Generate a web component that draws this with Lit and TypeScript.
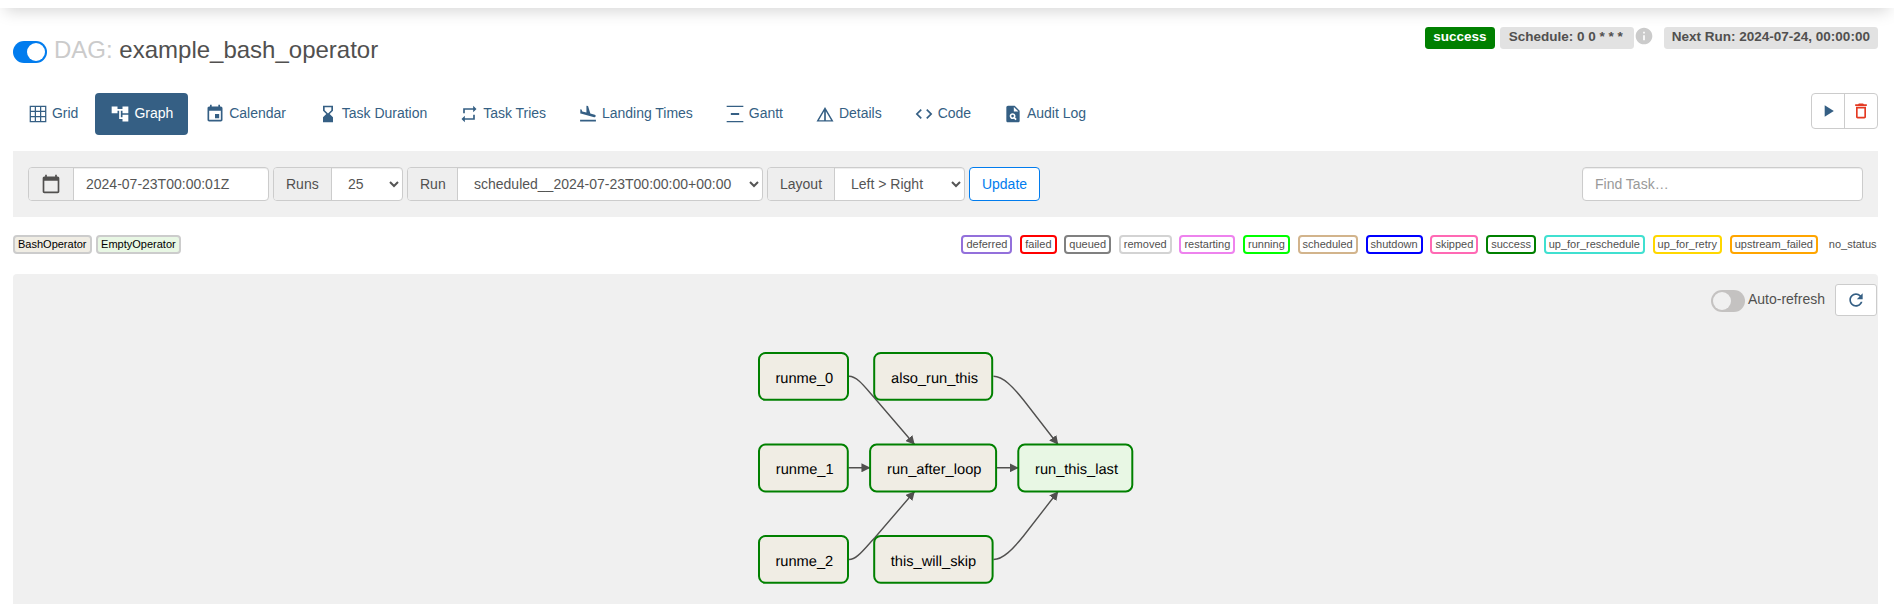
import { LitElement, html, css, svg } from "lit";
import { customElement, property } from "lit/decorators.js";

const ICONS: Record<string, string> = {
  grid: "M2 2h20v20H2zM3.5 3.5v4.6h4.6V3.5zM9.6 3.5v4.6h4.8V3.5zM15.9 3.5v4.6h4.6V3.5zM3.5 9.6v4.8h4.6v-4.8zM9.6 9.6v4.8h4.8v-4.8zM15.9 9.6v4.8h4.6v-4.8zM3.5 15.9v4.6h4.6v-4.6zM9.6 15.9v4.6h4.8v-4.6zM15.9 15.9v4.6h4.6v-4.6z",
  graph: "M22 11V3h-7v3H9V3H2v8h7V8h2v10h4v3h7v-8h-7v3h-2V8h2v3z",
  event: "M17 12h-5v5h5v-5zM16 1v2H8V1H6v2H5c-1.11 0-1.99.9-1.99 2L3 19c0 1.1.89 2 2 2h14c1.1 0 2-.9 2-2V5c0-1.1-.9-2-2-2h-1V1h-2zm3 18H5V8h14v11z",
  hourglass: "M18 22l-.01-6L14 12l3.99-4.01L18 2H6v6l4 4-4 3.99V22h12zM8 7.5V4h8v3.5l-4 4-4-4z",
  repeat: "M7 7h10v3l4-4-4-4v3H5v6h2V7zm10 10H7v-3l-4 4 4 4v-3h12v-6h-2v4z",
  landing: "M2.5 19h19v2h-19zm7.18-5.73l4.35 1.16 5.31 1.42c.8.21 1.62-.26 1.84-1.06.21-.8-.26-1.62-1.06-1.84l-5.31-1.42-2.76-9.02L10.12 2v8.28L5.15 8.95l-.93-2.32-1.45-.39v5.17l1.6.43 5.31 1.43z",
  gantt: "M22 2.2v1.4H2V2.2h20zM7 10.8v2.4h10v-2.4H7zM2 20.4v1.4h20v-1.4H2z",
  triangle: "M12 3.6L1.8 21h20.4L12 3.6zm1 5L19.3 19.4H13zM11 8.6V19.4H4.7z",
  code: "M9.4 16.6L4.8 12l4.6-4.6L8 6l-6 6 6 6 1.4-1.4zm5.2 0l4.6-4.6-4.6-4.6L16 6l6 6-6 6-1.4-1.4z",
  audit: "M14 2H6c-1.1 0-1.99.9-1.99 2L4 20c0 1.1.89 2 1.99 2H18c1.1 0 2-.9 2-2V8l-6-6zm1.04 17.45l-1.88-1.88c-1.33.71-3.01.53-4.13-.59-1.37-1.37-1.37-3.58 0-4.95 1.37-1.37 3.58-1.37 4.95 0 1.12 1.12 1.31 2.8.59 4.13l1.88 1.88-1.41 1.41zM13 9V3.5L18.5 9H13zM11.5 12.9a1.6 1.6 0 1 0 0 3.2 1.6 1.6 0 0 0 0-3.2z",
  calendar: "M20 3h-1V1h-2v2H7V1H5v2H4c-1.1 0-2 .9-2 2v16c0 1.1.9 2 2 2h16c1.1 0 2-.9 2-2V5c0-1.1-.9-2-2-2zm0 18H4V8h16v13z",
  play: "M8 5v14l11-7z",
  trash: "M6 19c0 1.1.9 2 2 2h8c1.1 0 2-.9 2-2V7H6v12zM8 9h8v10H8V9zm7.5-5l-1-1h-5l-1 1H5v2h14V4h-3.5z",
  refresh: "M17.65 6.35C16.2 4.9 14.21 4 12 4c-4.42 0-7.99 3.58-7.99 8s3.57 8 7.99 8c3.73 0 6.84-2.55 7.73-6h-2.08c-.82 2.33-3.04 4-5.65 4-3.31 0-6-2.69-6-6s2.69-6 6-6c1.66 0 3.14.69 4.22 1.78L13 11h7V4l-2.35 2.35z",
  info: "M12 2C6.48 2 2 6.48 2 12s4.48 10 10 10 10-4.48 10-10S17.52 2 12 2zm1 15h-2v-6h2v6zm0-8h-2V7h2v2z",
};

const TABS: [string, string][] = [
  ["grid", "Grid"],
  ["graph", "Graph"],
  ["event", "Calendar"],
  ["hourglass", "Task Duration"],
  ["repeat", "Task Tries"],
  ["landing", "Landing Times"],
  ["gantt", "Gantt"],
  ["triangle", "Details"],
  ["code", "Code"],
  ["audit", "Audit Log"],
];

const STATES: [string, string][] = [
  ["deferred", "mediumpurple"],
  ["failed", "red"],
  ["queued", "gray"],
  ["removed", "lightgrey"],
  ["restarting", "violet"],
  ["running", "lime"],
  ["scheduled", "tan"],
  ["shutdown", "blue"],
  ["skipped", "hotpink"],
  ["success", "green"],
  ["up_for_reschedule", "turquoise"],
  ["up_for_retry", "gold"],
  ["upstream_failed", "orange"],
];

/* Canvas coordinates; the drawing's origin is the top left of the panel. */
const NODES = [
  { id: "runme_0", x: 746, y: 79, w: 89, h: 46.8, tx: 762.4, ty: 109 },
  { id: "also_run_this", x: 861.2, y: 79, w: 118, h: 46.8, tx: 878, ty: 109 },
  { id: "runme_1", x: 746, y: 170.6, w: 88.8, h: 46.8, tx: 762.8, ty: 200 },
  { id: "run_after_loop", x: 857.1, y: 170.6, w: 126, h: 46.8, tx: 874, ty: 200 },
  { id: "run_this_last", x: 1005.3, y: 170.6, w: 114, h: 46.8, tx: 1022, ty: 200, empty: true },
  { id: "runme_2", x: 746, y: 262, w: 89, h: 46.8, tx: 762.4, ty: 291.6 },
  { id: "this_will_skip", x: 861.2, y: 262, w: 118.4, h: 46.8, tx: 877.8, ty: 291.6 },
];

const EDGES = [
  "M836 102.3C844 102.3 851 112 862 124.5L901.5 170.5",
  "M836 285.5C844 285.5 851 275 862 263.5L901.5 217.5",
  "M980.5 102.3C990 102.3 1000 113 1010.5 126L1045 170.5",
  "M980.5 285.5C990 285.5 1000 275 1010.5 262L1045 217.5",
  "M835.5 193.8L857 193.8",
  "M984 193.8L1005.3 193.8",
];

@customElement("md-icon")
class MdIcon extends LitElement {
  @property() name = "";
  static styles = css`
    :host { display: block; width: 20px; height: 20px; flex: none; }
    .glyph { display: block; width: 100%; height: 100%; fill: currentColor; }
  `;
  render() {
    return html`<svg class="glyph" viewBox="0 0 24 24"><path fill-rule="evenodd" d=${ICONS[this.name]}></path></svg>`;
  }
}

@customElement("app-root")
class AppRoot extends LitElement {
  static styles = css`
    * { box-sizing: border-box; }
    :host {
      display: flex;
      flex-direction: column;
      height: 604px;
      overflow: hidden;
      background: #fff;
      color: #51504f;
      font: 14px/20px "Liberation Sans", Arial, sans-serif;
    }
    .navbar { height: 58px; margin-top: -50px; flex: none; background: #fff; box-shadow: 0 8px 16px -5px rgba(0, 0, 0, 0.17); }
    .page { flex: 1; display: flex; flex-direction: column; padding: 19px 16px 0 13px; min-height: 0; }
    .header { display: flex; justify-content: space-between; height: 66px; }
    .title { display: flex; align-items: flex-start; gap: 7px; padding-top: 14px; }
    .switch { width: 34px; height: 22px; border-radius: 11px; background: #017cee; padding: 2px; display: flex; justify-content: flex-end; }
    .switch.off { background: #c4c2c1; justify-content: flex-start; }
    .knob { width: 18px; height: 18px; border-radius: 50%; background: #fff; }
    .off .knob { background: #f0f0f0; }
    .name { margin: -4px 0 0; font-size: 24px; line-height: 26px; font-weight: 400; white-space: pre; }
    .muted { color: #cbcbcb; }
    .badges { display: flex; align-items: flex-start; }
    .label { height: 22px; padding: 0 8.1px; border-radius: 3.4px; background: #e2e2e2; font-weight: 700; font-size: 13.5px; line-height: 20px; white-space: pre; }
    .label.success { background: green; color: #fff; margin-right: 5px; }
    .label.schedule { width: 134px; padding-left: 9px; }
    .info { color: #cbcbcb; margin: -1px 10px 0 0; }
    .row { display: flex; justify-content: space-between; height: 58px; align-items: flex-start; }
    .tabs { display: flex; gap: 2px; }
    .tab { display: flex; gap: 4px; height: 42px; padding: 11px 15px; color: #355f84; border-radius: 4px; line-height: 19px; letter-spacing: -0.02px; white-space: nowrap; }
    .tab.active { background: #355f84; color: #fff; }
    .actions { display: flex; border: 1px solid #ccc; border-radius: 4px; height: 36px; width: 67px; }
    .action { flex: 1; display: flex; justify-content: center; padding-top: 7px; color: #355f84; }
    .action + .action { border-left: 1px solid #ccc; color: #e43921; }
    .filters { display: flex; gap: 4px; height: 66px; padding: 16px 15px; background: #f0f0f0; }
    .group { display: flex; height: 34px; border: 1px solid #ccc; border-radius: 4px; overflow: hidden; background: #fff; box-shadow: inset 0 1px 1px rgba(0, 0, 0, 0.075); }
    .addon { background: #eee; border-right: 1px solid #ccc; padding: 6px 12px; white-space: nowrap; }
    .field { flex: 1; min-width: 0; border: 0; background: transparent; font: inherit; color: #555; padding: 6px 12px; height: 32px; outline: 0; }
    .field::placeholder { color: #999; opacity: 1; }
    .date { width: 241px; }
    .date .addon { width: 45px; }
    .runs { width: 130px; }
    .runs .addon { width: 58px; }
    .run { width: 356px; }
    .run .addon { width: 50px; }
    .layout { width: 198px; }
    .find { width: 281px; margin-left: auto; }
    .update { width: 71px; height: 34px; border: 1px solid #017cee; border-radius: 4px; background: #fff; color: #017cee; font: inherit; padding: 0; }
    .legend { display: flex; justify-content: space-between; height: 57px; padding-top: 18px; font-size: 11px; line-height: 15px; }
    .ops { display: flex; gap: 4px; align-items: flex-start; color: #000; }
    .states { display: flex; gap: 7.8px; align-items: flex-start; padding-right: 1.5px; }
    .item { height: 19px; border: 2px solid #ccc; border-radius: 4px; padding: 0 3px; white-space: nowrap; }
    .none { line-height: 19px; padding-left: 3px; }
    .bash { background: #f0ede4; padding-right: 3.6px; }
    .empty { background: #e8f7e4; }
    .canvas { flex: 1; position: relative; background: #f0f0f0; border-radius: 4px 4px 0 0; overflow: hidden; min-height: 0; }
    .drawing { position: absolute; left: 0; top: 0; width: 1865px; height: 330px; }
    .node { fill: #f0ede4; stroke: green; stroke-width: 2; }
    .node.last { fill: #e8f7e4; }
    .edge { fill: none; stroke: #51504f; stroke-width: 1.4; }
    .head { fill: #51504f; }
    .task { font-size: 14.65px; fill: #000; text-rendering: geometricPrecision; }
    .controls { position: relative; display: flex; justify-content: flex-end; align-items: flex-start; padding: 10px 1px 0 0; }
    .controls .switch { margin: 6px 3px 0 0; }
    .auto { margin-right: 10px; line-height: 30px; }
    .reload { width: 42px; height: 32px; border: 1px solid #ccc; border-radius: 3px; background: #fff; color: #355f84; padding: 5px 10px; }
  `;

  render() {
    return html`
      <div class="navbar"></div>
      <div class="page">
        <div class="header">
          <div class="title">
            <div class="switch"><div class="knob"></div></div>
            <h3 class="name"><span class="muted">DAG:</span> example_bash_operator</h3>
          </div>
          <div class="badges">
            <span class="label success">success</span>
            <span class="label schedule">Schedule: 0 0 * * *</span>
            <md-icon class="info" name="info"></md-icon>
            <span class="label">Next Run: 2024-07-24, 00:00:00</span>
          </div>
        </div>
        <div class="row">
          <nav class="tabs">
            ${TABS.map(([icon, text]) => html`<a class="tab ${text === "Graph" ? "active" : ""}"><md-icon name=${icon}></md-icon>${text}</a>`)}
          </nav>
          <div class="actions">
            <div class="action"><md-icon name="play"></md-icon></div>
            <div class="action"><md-icon name="trash"></md-icon></div>
          </div>
        </div>
        <div class="filters">
          <div class="group date">
            <div class="addon"><md-icon name="calendar"></md-icon></div>
            <input class="field" .value=${"2024-07-23T00:00:01Z"} />
          </div>
          <div class="group runs">
            <div class="addon">Runs</div>
            <select class="field"><option>25</option></select>
          </div>
          <div class="group run">
            <div class="addon">Run</div>
            <select class="field"><option>scheduled__2024-07-23T00:00:00+00:00</option></select>
          </div>
          <div class="group layout">
            <div class="addon">Layout</div>
            <select class="field"><option>Left &gt; Right</option></select>
          </div>
          <button class="update">Update</button>
          <div class="group find"><input class="field" placeholder="Find Task…" /></div>
        </div>
        <div class="legend">
          <div class="ops">
            <span class="item bash">BashOperator</span>
            <span class="item empty">EmptyOperator</span>
          </div>
          <div class="states">
            ${STATES.map(([name, color]) => html`<span class="item" style="border-color:${color}">${name}</span>`)}
            <span class="none">no_status</span>
          </div>
        </div>
        <div class="canvas">
          <svg class="drawing" viewBox="0 0 1865 330">
            <defs>
              <marker id="head" viewBox="0 0 10 10" refX="9.5" refY="5" markerUnits="userSpaceOnUse" markerWidth="9" markerHeight="9" orient="auto">
                <path class="head" d="M0 0L10 5L0 10z"></path>
              </marker>
            </defs>
            ${EDGES.map((d) => svg`<path class="edge" d=${d} marker-end="url(#head)"></path>`)}
            ${NODES.map((n) => svg`
              <rect class="node ${n.empty ? "last" : ""}" x=${n.x} y=${n.y} width=${n.w} height=${n.h} rx="6.5"></rect>
              <text class="task" x=${n.tx} y=${n.ty}>${n.id}</text>`)}
          </svg>
          <div class="controls">
            <div class="switch off"><div class="knob"></div></div>
            <span class="auto">Auto-refresh</span>
            <div class="reload"><md-icon name="refresh"></md-icon></div>
          </div>
        </div>
      </div>
    `;
  }
}
